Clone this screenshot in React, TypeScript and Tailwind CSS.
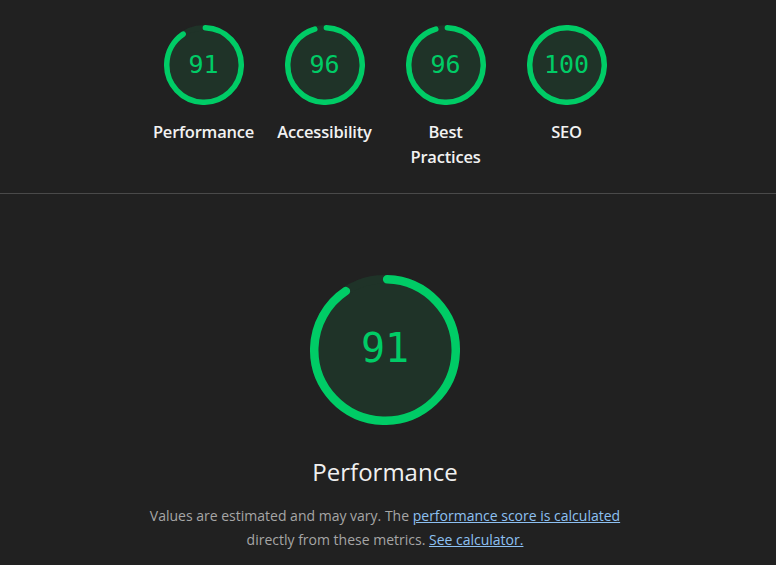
import React from "react";

interface GaugeProps {
  score: number;
  size: number;
  stroke: number;
  fontClass: string;
}

const Gauge: React.FC<GaugeProps> = ({ score, size, stroke, fontClass }) => {
  const r = size / 2 - stroke / 2;
  const c = 2 * Math.PI * r;
  const p = score / 100;
  const rot = -90 + ((0.25 * stroke) / c) * 360;
  let arc = p * c - stroke / 2;
  if (p === 1) arc = c;
  const half = size / 2;

  return (
    <div className="relative" style={{ width: size, height: size }}>
      <svg width={size} height={size} viewBox={`0 0 ${size} ${size}`}>
        <circle cx={half} cy={half} r={r} fill="#1f3328" stroke="#1f3328" strokeWidth={stroke} />
        <circle
          cx={half}
          cy={half}
          r={r}
          fill="none"
          stroke="#00cc66"
          strokeWidth={stroke}
          strokeLinecap="round"
          strokeDasharray={`${arc} ${c}`}
          transform={`rotate(${rot} ${half} ${half})`}
        />
      </svg>
      <div
        className={`absolute inset-0 flex items-center justify-center text-[#00cc66] font-['DejaVu_Sans_Mono',monospace] ${fontClass}`}
      >
        {score}
      </div>
    </div>
  );
};

const categories = [
  { name: "Performance", score: 91 },
  { name: "Accessibility", score: 96 },
  { name: "Best Practices", score: 96 },
  { name: "SEO", score: 100 },
];

export default function App() {
  return (
    <div className="min-h-[565px] w-full bg-[#212121] font-['Open_Sans',sans-serif]">
      <div className="flex justify-center pt-[25px] pb-[24px] pr-[6px]">
        {categories.map((cat) => (
          <div key={cat.name} className="w-[121px] flex flex-col items-center">
            <Gauge score={cat.score} size={80} stroke={5.5} fontClass="text-[25px] font-light" />
            <div className="mt-[14px] w-[104px] text-center text-[16.5px] leading-[25px] font-semibold text-[#f2f2f2] tracking-[-0.2px]">
              {cat.name}
            </div>
          </div>
        ))}
      </div>
      <div className="border-t border-[#4a4a4a]" />
      <div className="flex flex-col items-center pt-[81px] pr-[6px]">
        <Gauge score={91} size={150} stroke={8.5} fontClass="text-[40px] font-light pb-[5px]" />
        <div className="mt-[30px] text-[24px] leading-[34px] text-[#f0f0f0]">Performance</div>
        <p className="mt-[15px] w-[490px] text-center text-[14px] leading-[24px] text-[#a6a6a6]">
          Values are estimated and may vary. The{" "}
          <a href="#" className="text-[#8dc0f2] underline">
            performance score is calculated
          </a>{" "}
          directly from these metrics.{" "}
          <a href="#" className="text-[#8dc0f2] underline">
            See calculator.
          </a>
        </p>
      </div>
    </div>
  );
}
